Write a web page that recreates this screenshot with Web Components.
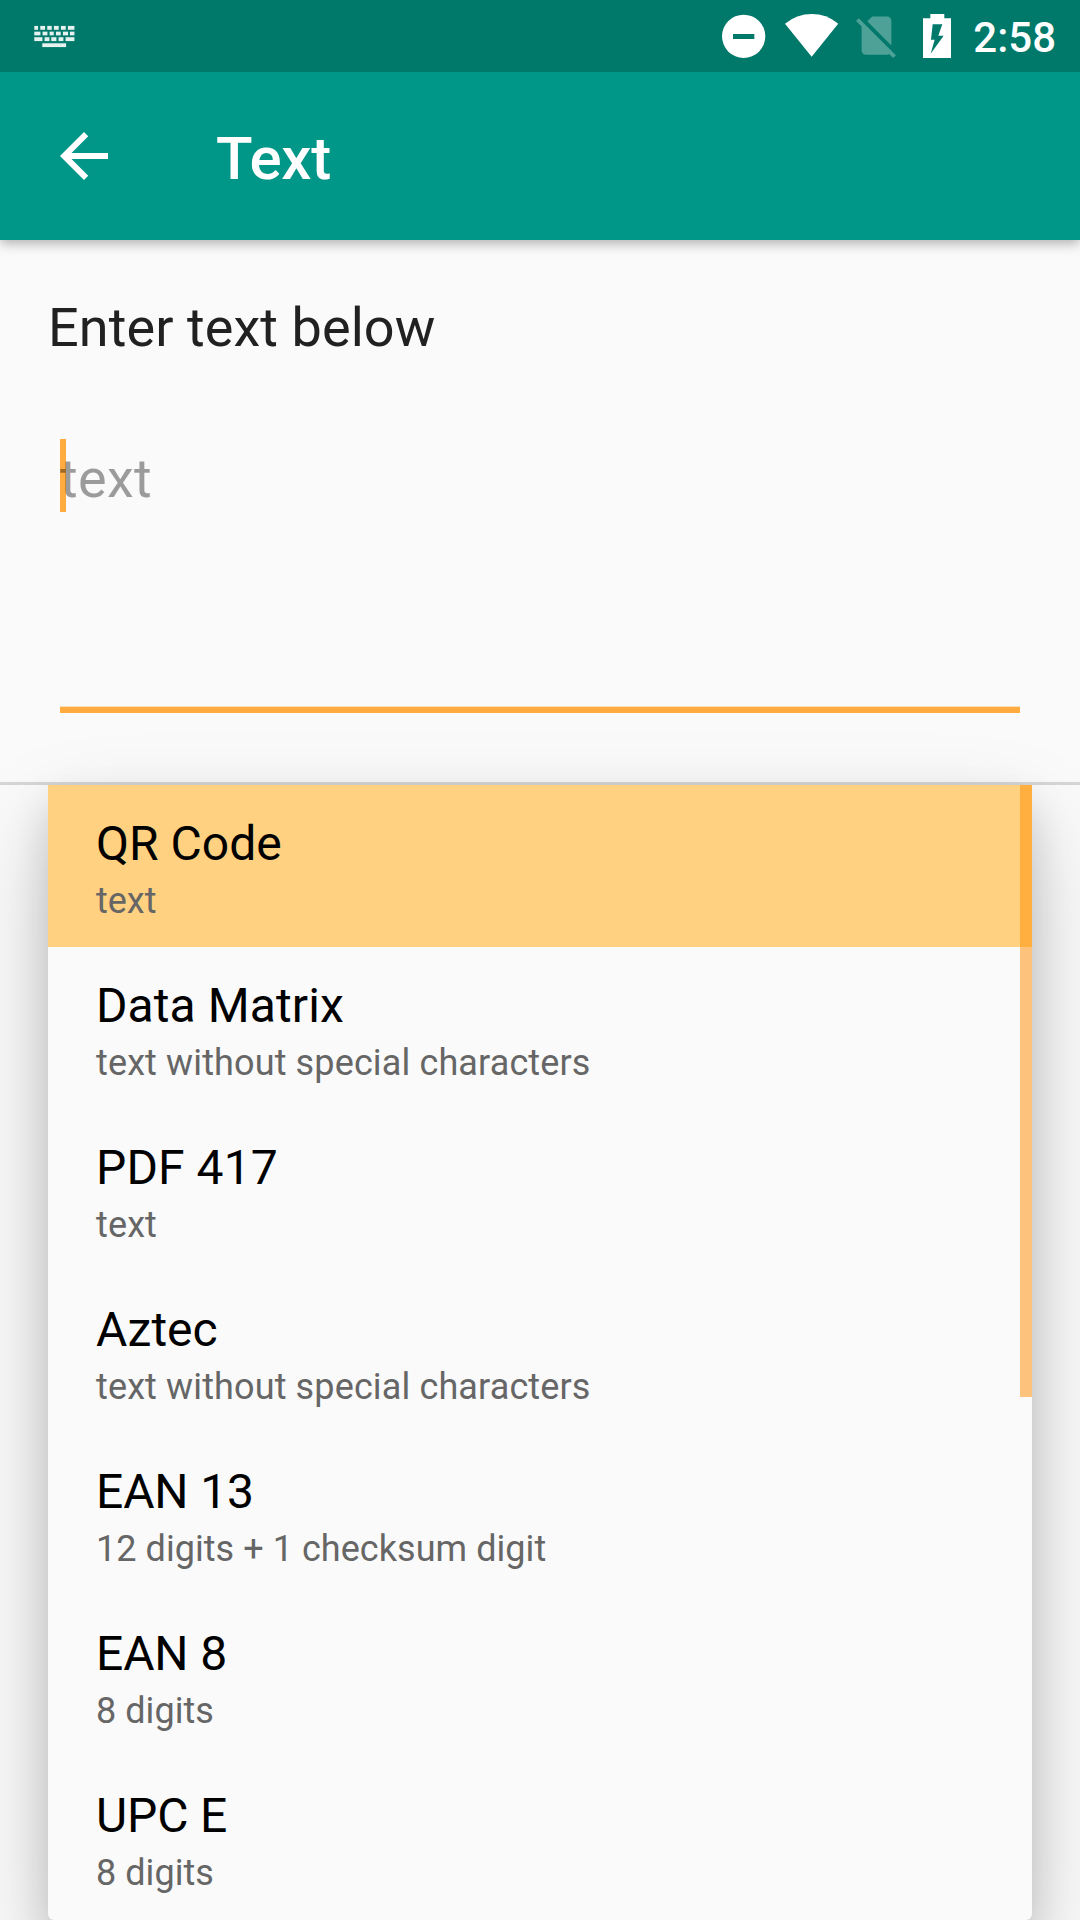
<!DOCTYPE html>
<html lang="en">
<head>
<meta charset="utf-8">
<title>Text</title>
<style>
html,body{margin:0;height:1920px;overflow:hidden;background:#fafafa;font-family:Roboto,sans-serif}
</style>
</head>
<body>
<barcode-screen></barcode-screen>
<script>
function define(name, html) {
  const t = document.createElement('template');
  t.innerHTML = html;
  customElements.define(name, class extends HTMLElement {
    constructor() {
      super();
      this.attachShadow({mode: 'open'}).appendChild(t.content.cloneNode(true));
    }
  });
}

define('status-bar', `
<style>
:host{display:flex;height:72px;background:#00796b;color:#fff;box-sizing:border-box;padding:0 24px 0 34px;justify-content:space-between;position:relative;z-index:1}
svg{display:block;flex:none}
.kb{margin-top:25px}
.right{display:flex;align-items:flex-start}
.dnd{margin-top:14px}.wifi{margin:14px 0 0 19px}.sim{margin:10px 0 0 12.7px}.bat{margin:14px 0 0 21px}
.time{font-size:42px;font-weight:500;line-height:50px;margin:13px 0 0 22px;white-space:nowrap}
</style>
<svg class="kb" width="41" height="23" viewBox="101 75 123 69"><g fill="#fff" fill-opacity=".9" stroke="#fff" stroke-opacity=".22" stroke-width="2">
<path d="M102 78h11v11h-11zM120 78h14v11h-14zM141 78h13v11h-13zM161 78h14v11h-14zM182 78h14v11h-14zM203 78h19v11h-19z"/>
<path d="M102 95h18v11h-18zM127 95h14v11h-14zM148 95h12v11h-12zM167 95h14v11h-14zM188 95h15v11h-15zM209 95h13v11h-13z"/>
<path d="M102 112h24v11h-24zM133 112h14v11h-14zM153 112h15v11h-15zM175 112h14v11h-14zM196 112h26v11h-26z"/>
<path d="M126 130h71v11h-71z"/></g></svg>
<div class="right">
<svg class="dnd" width="44" height="45" viewBox="66 42 132 135"><path fill="#fff" fill-rule="evenodd" d="M66 109a65 65 0 1 0 130 0a65 65 0 1 0 -130 0zM99 102h64v15h-64z"/></svg>
<svg class="wifi" width="53.3" height="44" viewBox="255 42 160 132"><path fill="#fff" d="M255 71Q290 42 335 42T415 71L335 170z"/></svg>
<svg class="sim" width="51" height="51" viewBox="0 0 24 24"><path fill="#fff" fill-opacity=".3" d="M18.99 5c0-1.1-.89-2-1.99-2h-7L7.66 5.34 19 16.68 18.99 5zM3.65 3.88L2.38 5.15 5 7.77V19c0 1.1.9 2 2 2h10.01c.35 0 .67-.1.96-.26l1.88 1.88 1.27-1.27L3.65 3.88z"/></svg>
<svg class="bat" width="28.3" height="44" viewBox="668 42 85 132"><path fill="#fff" fill-rule="evenodd" d="M690 42h42v13h21v119h-85V55h22zM697 73L692 119H703L691 161L730 107H714L726 73z"/></svg>
<span class="time">2:58</span>
</div>`);

define('app-bar', `
<style>
:host{display:flex;height:168px;background:#009688;color:#fff;padding-left:48px;align-items:flex-start;box-sizing:border-box;box-shadow:0 3px 12px rgba(0,0,0,.32);position:relative}
svg{display:block;margin-top:48px}
.t{font-size:60px;font-weight:500;line-height:71px;margin:51px 0 0 96px;letter-spacing:-.3px}
</style>
<svg width="72" height="72" viewBox="0 0 24 24"><path fill="#fff" d="M20 11H7.83l5.59-5.59L12 4l-8 8 8 8 1.41-1.41L7.83 13H20z"/></svg>
<div class="t"><slot></slot></div>`);

define('text-entry', `
<style>
:host{display:block;height:542px;box-sizing:border-box;padding:56px 60px 0 48px;font-size:54px;line-height:64px}
.label{color:#212121;letter-spacing:.08px}
.field{margin:79px 0 0 12px;height:274px;box-sizing:border-box;
 background:linear-gradient(#ffab40,#ffab40) 0 0/6px 73px no-repeat,linear-gradient(#ffab4055,#ffab4055) 0 267px/100% 1px no-repeat,linear-gradient(#ffab40,#ffab40) 0 268px/100% 6px no-repeat}
.hint{color:rgba(0,0,0,.38);padding-top:8px;letter-spacing:.3px}
</style>
<div class="label"><slot name="label"></slot></div>
<div class="field"><div class="hint"><slot></slot></div></div>`);

define('format-item', `
<style>
:host{display:block;height:162px;box-sizing:border-box;padding:31px 48px 0;white-space:nowrap}
:host([selected]){background:#ffd180}
.n{font-size:48px;line-height:56px;color:#000;letter-spacing:var(--name-track,0)}
.d{font-size:36px;line-height:42px;margin-top:8px;color:#666;letter-spacing:var(--desc-track,0)}
</style>
<div class="n"><slot name="name"></slot></div>
<div class="d"><slot></slot></div>`);

define('format-menu', `
<style>
:host{display:block;border-top:3px solid #d6d6d6;height:1138px;box-sizing:border-box;position:relative}
.list{margin:0 48px;height:1135px;border-radius:0 0 6px 6px;background:#fafafa;position:relative;
 box-shadow:0 42px 96px rgba(0,0,0,.18),0 20px 40px rgba(0,0,0,.15)}
.thumb{position:absolute;right:0;top:0;width:12px;height:612px;background:rgba(255,140,0,.5)}
</style>
<div class="list"><slot></slot><div class="thumb"></div></div>`);

define('barcode-screen', `
<style>:host{display:flex;flex-direction:column;width:1080px;height:1920px;overflow:hidden;background:#fafafa}
app-bar,status-bar,text-entry,format-menu{flex:none}
.wide{--name-track:.1px;--desc-track:.13px}
.ean{--name-track:-.12px;--desc-track:.05px}</style>
<status-bar></status-bar>
<app-bar>Text</app-bar>
<text-entry><span slot="label">Enter text below</span>text</text-entry>
<format-menu>
<format-item selected><span slot="name">QR Code</span>text</format-item>
<format-item class="wide"><span slot="name">Data Matrix</span>text without special characters</format-item>
<format-item class="wide"><span slot="name">PDF 417</span>text</format-item>
<format-item class="wide" style="--name-track:0"><span slot="name">Aztec</span>text without special characters</format-item>
<format-item class="ean"><span slot="name">EAN 13</span>12 digits + 1 checksum digit</format-item>
<format-item class="ean"><span slot="name">EAN 8</span>8 digits</format-item>
<format-item class="ean"><span slot="name">UPC E</span>8 digits</format-item>
</format-menu>`);
</script>
</body>
</html>
